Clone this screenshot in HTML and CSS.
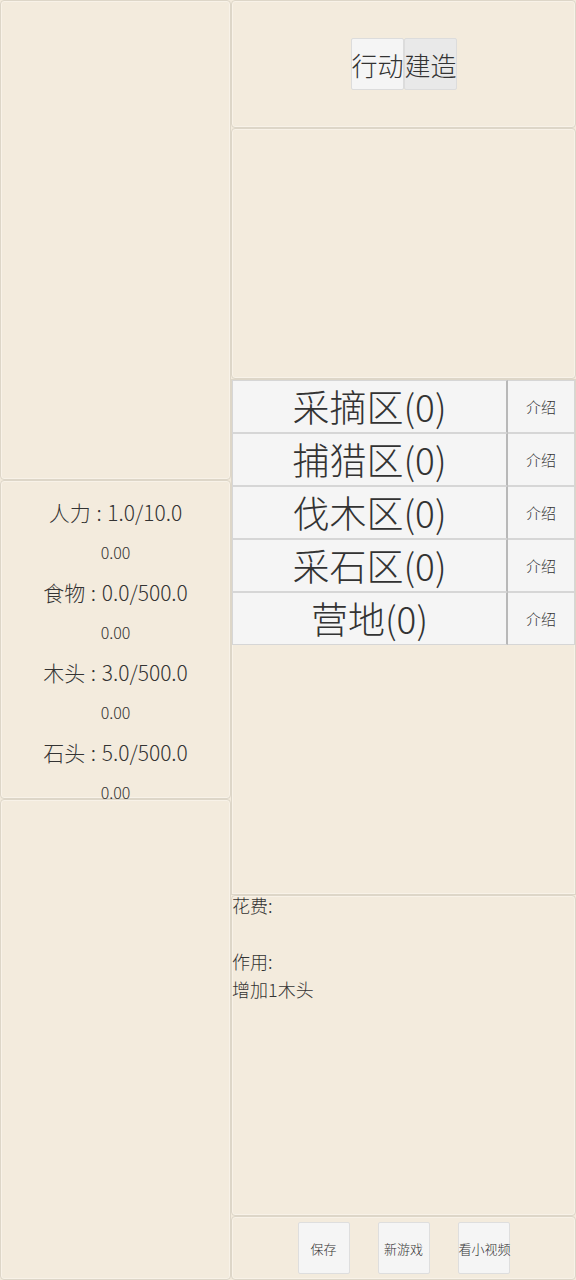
FILE: index.html
```html
<!DOCTYPE html>
<html lang="zh">
<head>
<meta charset="utf-8">
<title>建造</title>
<link rel="stylesheet" href="styles.css">
</head>
<body>
<div class="page">
  <div class="col-left">
    <div class="panel left-top"></div>
    <div class="panel stats">
      <div class="stat-main">人力 : 1.0/10.0</div>
      <div class="stat-sub">0.00</div>
      <div class="stat-main">食物 : 0.0/500.0</div>
      <div class="stat-sub">0.00</div>
      <div class="stat-main">木头 : 3.0/500.0</div>
      <div class="stat-sub">0.00</div>
      <div class="stat-main">石头 : 5.0/500.0</div>
      <div class="stat-sub">0.00</div>
    </div>
    <div class="panel left-bottom"></div>
  </div>
  <div class="col-right">
    <div class="panel tabs-panel">
      <div class="tabs">
        <button class="tab">行动</button>
        <button class="tab tab-active">建造</button>
      </div>
    </div>
    <div class="panel empty-panel"></div>
    <div class="panel list-panel">
      <div class="row"><button class="build">采摘区(0)</button><button class="intro">介绍</button></div>
      <div class="row"><button class="build">捕猎区(0)</button><button class="intro">介绍</button></div>
      <div class="row"><button class="build">伐木区(0)</button><button class="intro">介绍</button></div>
      <div class="row"><button class="build">采石区(0)</button><button class="intro">介绍</button></div>
      <div class="row"><button class="build">营地(0)</button><button class="intro">介绍</button></div>
    </div>
    <div class="panel desc-panel">
      <div class="desc">
        <div class="line">花费:</div>
        <div class="line"></div>
        <div class="line">作用:</div>
        <div class="line">增加1木头</div>
      </div>
    </div>
    <div class="panel footer">
      <button class="small">保存</button>
      <button class="small">新游戏</button>
      <button class="small">看小视频</button>
    </div>
  </div>
</div>
</body>
</html>
```

FILE: styles.css
```css
* { box-sizing: border-box; }
html, body {
  margin: 0;
  padding: 0;
  background: #f3ebdd;
}
body {
  font-family: "Noto Sans CJK SC", "Noto Sans", sans-serif;
  font-weight: 300;
  color: #333;
}
.page {
  display: flex;
  width: 576px;
  height: 1280px;
  overflow: hidden;
}
.col-left {
  width: 231px;
  display: flex;
  flex-direction: column;
}
.col-right {
  width: 345px;
  display: flex;
  flex-direction: column;
}
.panel {
  background: #f3ebdd;
  border: 1px solid #ddd6c8;
  border-radius: 4px;
  box-shadow: inset 0 0 0 1px #f8f2e8;
}
.left-top { height: 480px; }
.stats {
  height: 319px;
  padding-top: 11px;
  text-align: center;
}
.left-bottom { height: 481px; }
.stat-main {
  font-size: 21px;
  line-height: 40px;
  word-spacing: 1px;
}
.stat-sub {
  font-size: 16px;
  line-height: 40px;
}
.tabs-panel {
  height: 128px;
  display: flex;
  align-items: center;
  justify-content: center;
}
.tabs { display: flex; }
button {
  font-family: inherit;
  font-weight: 300;
  color: #333;
  margin: 0;
  padding: 0;
  cursor: pointer;
}
.tab {
  height: 52px;
  width: 53px;
  font-size: 26px;
  background: #f5f5f5;
  border: 1px solid #dcdcdc;
  border-radius: 2px;
  white-space: nowrap;
}
.tab-active { background: #e9e9e9; }
.empty-panel { height: 251px; }
.list-panel {
  height: 516px;
  border-radius: 0;
}
.row {
  display: flex;
  height: 53px;
}
.build {
  flex: 0 0 276px;
  height: 53px;
  font-size: 37px;
  line-height: 1;
  background: #f5f5f5;
  border: 1px solid #d6d6d6;
  border-right: 2px solid #b8b8b8;
}
.intro {
  flex: 1;
  height: 53px;
  font-size: 15px;
  background: #f5f5f5;
  border: 1px solid #d6d6d6;
  border-left: 0;
}
.desc-panel {
  height: 321px;
}
.desc {
  margin-top: -5px;
  font-size: 18px;
  line-height: 28px;
}
.line { height: 28px; }
.footer {
  height: 64px;
  display: flex;
  align-items: center;
  justify-content: center;
}
.small {
  width: 52px;
  height: 52px;
  margin: 0 14px;
  font-size: 13px;
  background: #f5f5f5;
  border: 1px solid #dedede;
  border-radius: 2px;
  white-space: nowrap;
  overflow: visible;
}
```
